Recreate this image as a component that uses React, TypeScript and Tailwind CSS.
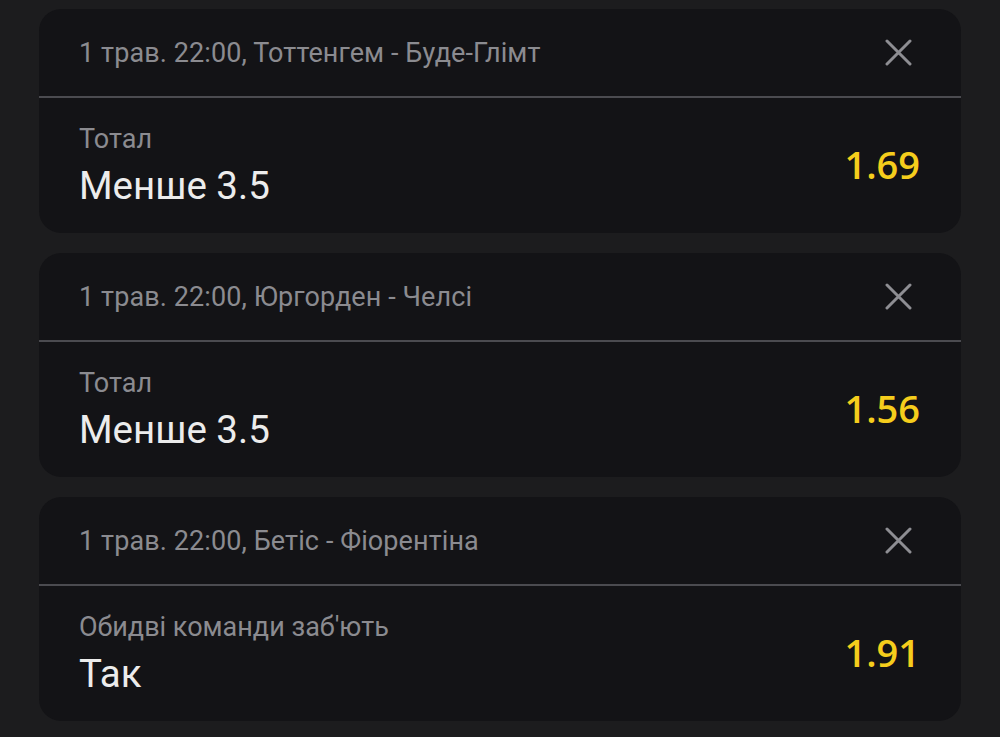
const bets = [
  {
    id: 1,
    event: "1 трав. 22:00, Тоттенгем - Буде-Глімт",
    market: "Тотал",
    pick: "Менше 3.5",
    odds: "1.69",
  },
  {
    id: 2,
    event: "1 трав. 22:00, Юргорден - Челсі",
    market: "Тотал",
    pick: "Менше 3.5",
    odds: "1.56",
  },
  {
    id: 3,
    event: "1 трав. 22:00, Бетіс - Фіорентіна",
    market: "Обидві команди заб'ють",
    pick: "Так",
    odds: "1.91",
  },
];

function CloseIcon() {
  return (
    <svg width="27" height="27" viewBox="0 0 27 27" fill="none">
      <path
        d="M2 2L25 25M25 2L2 25"
        stroke="#8e8e93"
        strokeWidth="3"
        strokeLinecap="round"
      />
    </svg>
  );
}

export default function App() {
  return (
    <div
      className="min-h-[737px] w-[1000px] bg-[#1c1c1e] px-[39px] pt-[9px] flex flex-col gap-5"
      style={{ fontFamily: "Roboto, 'Liberation Sans', sans-serif" }}
    >
      {bets.map((bet) => (
        <div key={bet.id} className="rounded-[22px] bg-[#131316] overflow-hidden">
          {/* header with match */}
          <div className="h-[89px] flex items-center justify-between pl-10 pr-[49px] border-b-2 border-[#4b4b50]">
            <span className="text-[27px] leading-[30px] text-[#8b8b90] tracking-[0.1px]">
              {bet.event}
            </span>
            <CloseIcon />
          </div>
          {/* selection */}
          <div className="h-[135px] flex items-center justify-between pl-10 pr-[41px]">
            <div className="flex flex-col">
              <span className="text-[27px] leading-[30px] text-[#8b8b90]">
                {bet.market}
              </span>
              <span className="mt-[10px] text-[38.5px] leading-[44px] text-[#ececec]">
                {bet.pick}
              </span>
            </div>
            <span
              className="mb-1 text-[38px] leading-[44px] font-semibold text-[#f5cd1c]"
              style={{ fontFamily: "'Open Sans', 'Noto Sans', sans-serif" }}
            >
              {bet.odds}
            </span>
          </div>
        </div>
      ))}
    </div>
  );
}
